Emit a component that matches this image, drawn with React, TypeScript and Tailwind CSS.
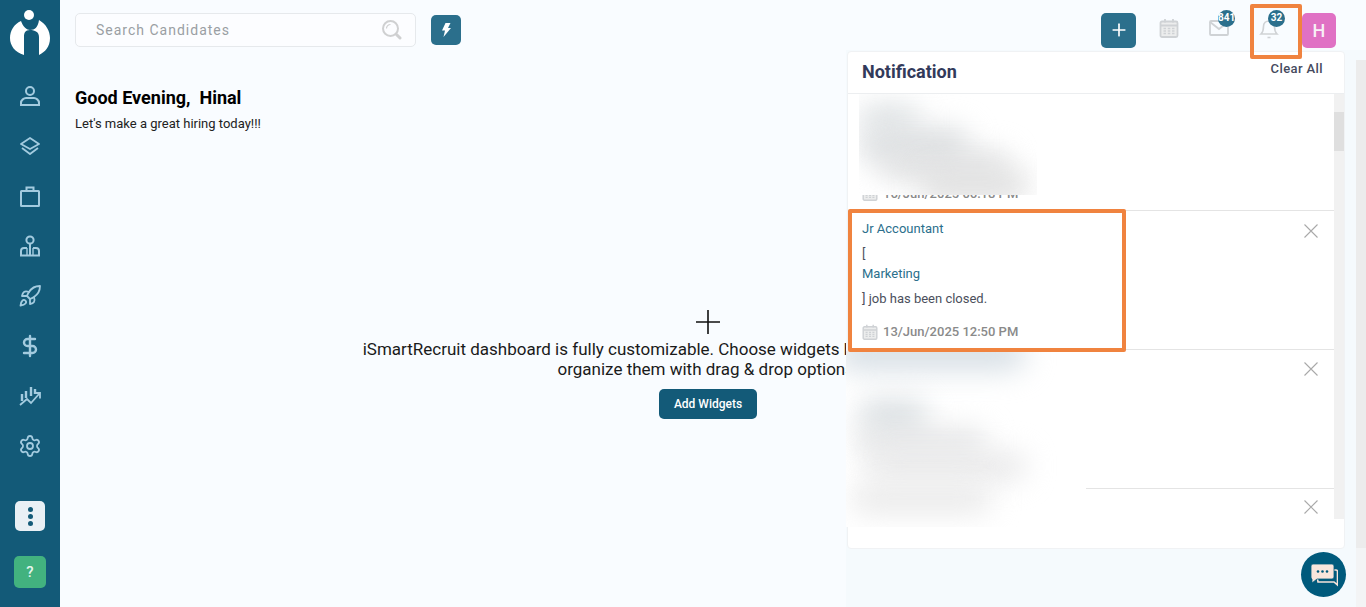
import { Plus, Rocket, DollarSign, Settings } from "lucide-react";

const font = "font-['Roboto','Liberation_Sans',sans-serif]";

function LogoMark() {
  return (
    <svg width="42" height="48" viewBox="0 0 42 48">
      <path d="M12 12 C14 18 18 21 21 21 C26 21 29 18 30 11 C37 15 41 22 41 29 C41 38 36 43 30 46 L30 28 C30 23 26 21 21 21 C16 21 15 24 15 28 L15 46 C6 43 1 37 1 29 C1 22 5 15 12 12 Z" fill="#fff" />
      <circle cx="20" cy="6" r="5" fill="#fff" />
    </svg>
  );
}

const navClass = "text-[#a3cbdf]";

function PersonIcon() {
  return (
    <svg width="22" height="22" viewBox="0 0 22 22" fill="none" stroke="currentColor" strokeWidth="2" className={navClass}>
      <circle cx="11" cy="6" r="4" />
      <path d="M2 20 v-2 c0-3 3-5 5-5 h8 c2 0 5 2 5 5 v2 z" />
    </svg>
  );
}

function LayersIcon() {
  return (
    <svg width="20" height="20" viewBox="0 0 20 20" fill="none" stroke="currentColor" strokeWidth="1.8" strokeLinejoin="round" className={navClass}>
      <path d="M10 2 L19 8 L10 13 L1 8 Z" />
      <path d="M2 12 L10 18 L18 12" />
    </svg>
  );
}

function CaseIcon() {
  return (
    <svg width="22" height="22" viewBox="0 0 22 22" fill="none" stroke="currentColor" strokeWidth="2" className={navClass}>
      <rect x="2" y="6" width="18" height="15" rx="0.5" />
      <path d="M7.5 6 V2.5 H14.5 V6" />
    </svg>
  );
}

function OrgIcon() {
  return (
    <svg width="22" height="22" viewBox="0 0 22 22" fill="none" stroke="currentColor" strokeWidth="2" className={navClass}>
      <circle cx="11" cy="5" r="3.6" />
      <path d="M11 9 V20" />
      <path d="M8 13 H5 C3 13 2 14.5 2 16 V20.5 H20 V16 C20 14.5 19 13 17 13 H14" />
      <path d="M8 13 V20 M14 13 V20" strokeWidth="1.4" />
    </svg>
  );
}

function ChartIcon() {
  return (
    <svg width="22" height="22" viewBox="0 0 22 22" fill="none" stroke="currentColor" strokeWidth="1.8" className={navClass}>
      <path d="M3 16 V9 M7 13 V6 M12 11 V2 M16 9 V4" strokeWidth="2.4" />
      <path d="M1 20 L8 14 L12 18 L20 9 M15.5 8 H21 V13.5" />
    </svg>
  );
}

function CalendarIcon({ size = 20 }: { size?: number }) {
  return (
    <svg width={size} height={size} viewBox="0 0 20 20" fill="none" stroke="#cfd2d5" strokeWidth="1.8">
      <rect x="1.5" y="3.5" width="17" height="15.5" rx="1.5" fill="#eceded" />
      <path d="M1.5 7.5 H18.5 M6 1 V4.5 M14 1 V4.5" />
      <path d="M4.5 10.5 H7 M8.8 10.5 H11.3 M13 10.5 H15.5 M4.5 13 H7 M8.8 13 H11.3 M13 13 H15.5 M4.5 15.5 H7 M8.8 15.5 H11.3 M13 15.5 H15.5" strokeWidth="1.4" />
    </svg>
  );
}

function Badge({ label }: { label: string }) {
  return (
    <span className="absolute -top-[8px] left-[9px] flex h-[17px] min-w-[17px] items-center justify-center rounded-full bg-[#2b6f8c] text-[10px] font-bold leading-none text-white">
      {label}
    </span>
  );
}

function Blur({ className }: { className: string }) {
  return <div className={`absolute rounded-full blur-[14px] ${className}`} />;
}

function CloseBtn() {
  return (
    <svg width="14" height="14" viewBox="0 0 14 14" stroke="#a9a9a9" strokeWidth="1.1" className="shrink-0">
      <path d="M0.5 0.5 L13.5 13.5 M13.5 0.5 L0.5 13.5" />
    </svg>
  );
}

export default function App() {
  return (
    <div className={`${font} relative flex h-[607px] w-[1366px] overflow-hidden bg-[#f9fcff] text-black`}>
      {/* sidebar */}
      <aside className="flex h-full w-[60px] shrink-0 flex-col items-center bg-[#135a78]">
        <div className="mt-[9px]">
          <LogoMark />
        </div>
        <nav className="mt-[14px] flex flex-col items-center">
          <div className="flex h-[50px] items-center justify-center"><PersonIcon /></div>
          <div className="flex h-[50px] items-center justify-center"><LayersIcon /></div>
          <div className="flex h-[50px] items-center justify-center"><CaseIcon /></div>
          <div className="flex h-[50px] items-center justify-center"><OrgIcon /></div>
          <div className="flex h-[50px] items-center justify-center"><Rocket className={`h-[24px] w-[24px] ${navClass}`} strokeWidth={1.8} /></div>
          <div className="flex h-[50px] items-center justify-center"><DollarSign className={`h-[24px] w-[24px] ${navClass}`} strokeWidth={2.4} /></div>
          <div className="flex h-[50px] items-center justify-center"><ChartIcon /></div>
          <div className="flex h-[50px] items-center justify-center"><Settings className={`h-[24px] w-[24px] ${navClass}`} strokeWidth={1.8} /></div>
        </nav>
        <button className="mt-[30px] flex h-[30px] w-[30px] flex-col items-center justify-center gap-[2px] rounded-[5px] bg-[#e9f0f5]">
          <span className="h-[5px] w-[5px] rounded-full bg-[#135a78]" />
          <span className="h-[5px] w-[5px] rounded-full bg-[#135a78]" />
          <span className="h-[5px] w-[5px] rounded-full bg-[#135a78]" />
        </button>
        <button className="mt-[25px] flex h-[32px] w-[32px] items-center justify-center rounded-[5px] bg-[#42b27f] text-[15px] font-medium text-[#e6f6ee]">?</button>
      </aside>

      {/* main column */}
      <main className="flex min-w-0 flex-1 flex-col">
        <header className="flex h-[60px] shrink-0 items-center pl-[15px] pr-[30px]">
          <div className="flex h-[34px] w-[341px] items-center justify-between rounded-[5px] border border-[#e6e9ec] bg-[#fcfdff] pl-[20px] pr-[13px]">
            <span className="text-[14px] tracking-[1px] text-[#9a9fa3]">Search Candidates</span>
            <svg width="20" height="20" viewBox="0 0 20 20" fill="none" stroke="#cfd0d1" strokeWidth="2">
              <circle cx="8.5" cy="8.5" r="7.5" />
              <path d="M4.5 8.5 a4 4 0 0 1 4 -4" strokeWidth="1.2" />
              <path d="M14.5 14.5 L18 18" strokeWidth="3" strokeLinecap="round" />
            </svg>
          </div>
          <button className="ml-[15px] flex h-[30px] w-[30px] items-center justify-center rounded-[5px] bg-[#2b6f8c]">
            <svg width="10" height="14" viewBox="0 0 10 14" fill="#fff">
              <path d="M4.5 0 H9.5 L7 5 H10 L2.5 14 L4 7.5 H1 Z" />
            </svg>
          </button>
          <div className="ml-auto flex items-center">
            <button className="flex h-[35px] w-[35px] items-center justify-center rounded-[5px] bg-[#2b6f8c]">
              <Plus className="h-[20px] w-[20px] text-white" strokeWidth={2} />
            </button>
            <div className="mb-[5px] ml-[23px]"><CalendarIcon /></div>
            <div className="relative mb-[5px] ml-[30px] h-[20px] w-[20px]">
              <svg width="20" height="20" viewBox="0 0 20 20" fill="none" stroke="#cfd2d5" strokeWidth="1.8">
                <rect x="1" y="3" width="18" height="14" rx="1" />
                <path d="M1 4 L10 11 L19 4" />
              </svg>
              <Badge label="841" />
            </div>
            <div className="relative mb-[5px] ml-[30px] h-[20px] w-[20px]">
              <svg width="20" height="22" viewBox="0 0 20 22" fill="none" stroke="#cfd2d5" strokeWidth="1.6">
                <path d="M2 16 C4 14 4.5 12 4.5 8.5 C4.5 5 7 3 10 3 C13 3 15.5 5 15.5 8.5 C15.5 12 16 14 18 16 Z" />
                <path d="M8.5 19.5 H11.5" />
              </svg>
              <Badge label="32" />
            </div>
            <div className="ml-[23px] flex h-[35px] w-[34px] items-center justify-center rounded-[5px] bg-[#e071c4] text-[18px] font-medium text-[#f8f0f6]">H</div>
          </div>
        </header>

        <section className="pl-[15px] pt-[27px]">
          <h1 className="text-[18px] font-bold leading-[21px]">Good Evening,&nbsp;&nbsp;Hinal</h1>
          <p className="mt-[9px] text-[13px] leading-[14px] text-[#222]">Let's make a great hiring today!!!</p>
        </section>

        <section className="mt-[179px] flex flex-col items-center pr-[10px]">
          <svg width="24" height="24" viewBox="0 0 24 24" stroke="#111" strokeWidth="1.6">
            <path d="M12 0 V24 M0 12 H24" />
          </svg>
          <p className="mt-[5px] whitespace-nowrap text-center text-[17px] leading-[20px] text-[#1a1a1a]">
            iSmartRecruit dashboard is fully customizable. Choose widgets based on your priorities and
            <br />
            organize them with drag &amp; drop options.
          </p>
          <button className="mt-[10px] h-[30px] w-[98px] rounded-[5px] bg-[#135a78] text-[12px] font-medium text-white">Add Widgets</button>
        </section>
      </main>

      {/* tint behind the dropdown */}
      <div className="absolute bottom-0 left-[846px] right-0 top-[50px] bg-[#f5fafd]" />

      {/* page scrollbar */}
      <div className="absolute bottom-0 right-0 top-[60px] flex w-[10px] flex-col bg-[#f3f4f5]">
        <div className="h-[488px] bg-[#ececec]" />
      </div>

      {/* notification dropdown */}
      <div className="absolute left-[847px] top-[51px] flex h-[498px] w-[498px] flex-col rounded-[4px] border border-[#f0f2f4] bg-white">
        <div className="flex h-[42px] shrink-0 justify-between border-b border-[#eceef0] pl-[14px] pr-[21px]">
          <span className="mt-[9px] text-[18px] font-bold leading-[22px] text-[#323a5a]">Notification</span>
          <span className="mt-[9px] text-[13px] font-medium leading-[15px] tracking-[0.4px] text-[#454a5e]">Clear All</span>
        </div>
        <div className="flex h-[425px] shrink-0">
          <div className="min-w-0 flex-1 overflow-hidden text-[13px] text-[#4b4f5c]">
            <div className="relative h-[117px] border-b border-[#e4e4e4]">
              <div className="absolute bottom-[7px] left-[14px] flex items-center gap-[5px] text-[13px] font-medium text-[#8a8a8a]">
                <CalendarIcon size={16} />
                <span>16/Jun/2025 06:18 PM</span>
              </div>
              <div className="absolute left-[11px] top-0 h-[101px] w-[178px] overflow-hidden bg-white">
                <Blur className="left-[0px] top-[10px] h-[30px] w-[60px] bg-[#dfe3e5]" />
                <Blur className="left-[0px] top-[34px] h-[34px] w-[110px] bg-[#dcdfe1]" />
                <Blur className="left-[20px] top-[58px] h-[26px] w-[130px] bg-[#dfe0e1]" />
                <Blur className="left-[60px] top-[76px] h-[30px] w-[110px] bg-[#dfdfdf]" />
              </div>
            </div>
            <div className="flex h-[139px] justify-between border-b border-[#e4e4e4] pl-[14px] pr-[16px] pt-[10px]">
              <div>
                <div className="leading-[16px] text-[#2b6f8c]">Jr Accountant</div>
                <div className="mt-[9px] leading-[16px]">[</div>
                <div className="mt-[4px] leading-[16px] text-[#2b6f8c]">Marketing</div>
                <div className="mt-[9px] leading-[16px]">] job has been closed.</div>
                <div className="mt-[17px] flex items-center gap-[5px] text-[13px] font-medium leading-[16px] text-[#8a8a8a]">
                  <CalendarIcon size={16} />
                  <span>13/Jun/2025 12:50 PM</span>
                </div>
              </div>
              <div className="pt-[3px]"><CloseBtn /></div>
            </div>
            <div className="flex h-[139px] justify-end border-b border-[#e4e4e4] pr-[16px] pt-[12px]">
              <CloseBtn />
            </div>
            <div className="flex h-[40px] justify-end pr-[16px] pt-[11px]">
              <CloseBtn />
            </div>
          </div>
          <div className="h-full w-[10px] shrink-0 bg-[#f1f1f1] pt-[18px]">
            <div className="h-[39px] w-full bg-[#dfdfdf]" />
          </div>
        </div>
        {/* redacted rows */}
        <div className="absolute left-[-2px] top-[299px] h-[176px] w-[240px] overflow-hidden bg-white">
          <Blur className="left-[-10px] top-[-16px] h-[36px] w-[190px] bg-[#d8e0e6]" />
          <Blur className="left-[12px] top-[48px] h-[36px] w-[70px] bg-[#dce1e4]" />
          <Blur className="left-[10px] top-[78px] h-[26px] w-[130px] bg-[#e4e5e6]" />
          <Blur className="left-[20px] top-[102px] h-[26px] w-[160px] bg-[#e7e7e8]" />
          <Blur className="left-[5px] top-[134px] h-[28px] w-[140px] bg-[#e9e9e9]" />
        </div>
      </div>

      {/* annotation boxes */}
      <div className="pointer-events-none absolute left-[848px] top-[209px] h-[143px] w-[278px] rounded-[2px] border-[4px] border-[#f0833f]" />
      <div className="pointer-events-none absolute left-[1250px] top-[4px] h-[55px] w-[52px] rounded-[2px] border-[4px] border-[#f0833f]" />

      {/* chat launcher */}
      <button className="absolute left-[1301px] top-[552px] flex h-[45px] w-[45px] items-center justify-center rounded-full bg-[#005a7c]">
        <svg width="28" height="24" viewBox="0 0 28 24">
          <path d="M6 7 H26 a1.5 1.5 0 0 1 1.5 1.5 V22 L24 19 H8 Z" fill="none" stroke="#f6e3da" strokeWidth="1.6" />
          <path d="M3 1 H22 a2 2 0 0 1 2 2 V14 a2 2 0 0 1 -2 2 H7 L2 20 V16 a2 2 0 0 1 -1 -2 V3 a2 2 0 0 1 2 -2 Z" fill="#f8e5dc" stroke="#005a7c" strokeWidth="0.8" />
          <circle cx="8" cy="8.5" r="1.3" fill="#005a7c" />
          <circle cx="12.5" cy="8.5" r="1.3" fill="#005a7c" />
          <circle cx="17" cy="8.5" r="1.3" fill="#005a7c" />
        </svg>
      </button>
    </div>
  );
}
